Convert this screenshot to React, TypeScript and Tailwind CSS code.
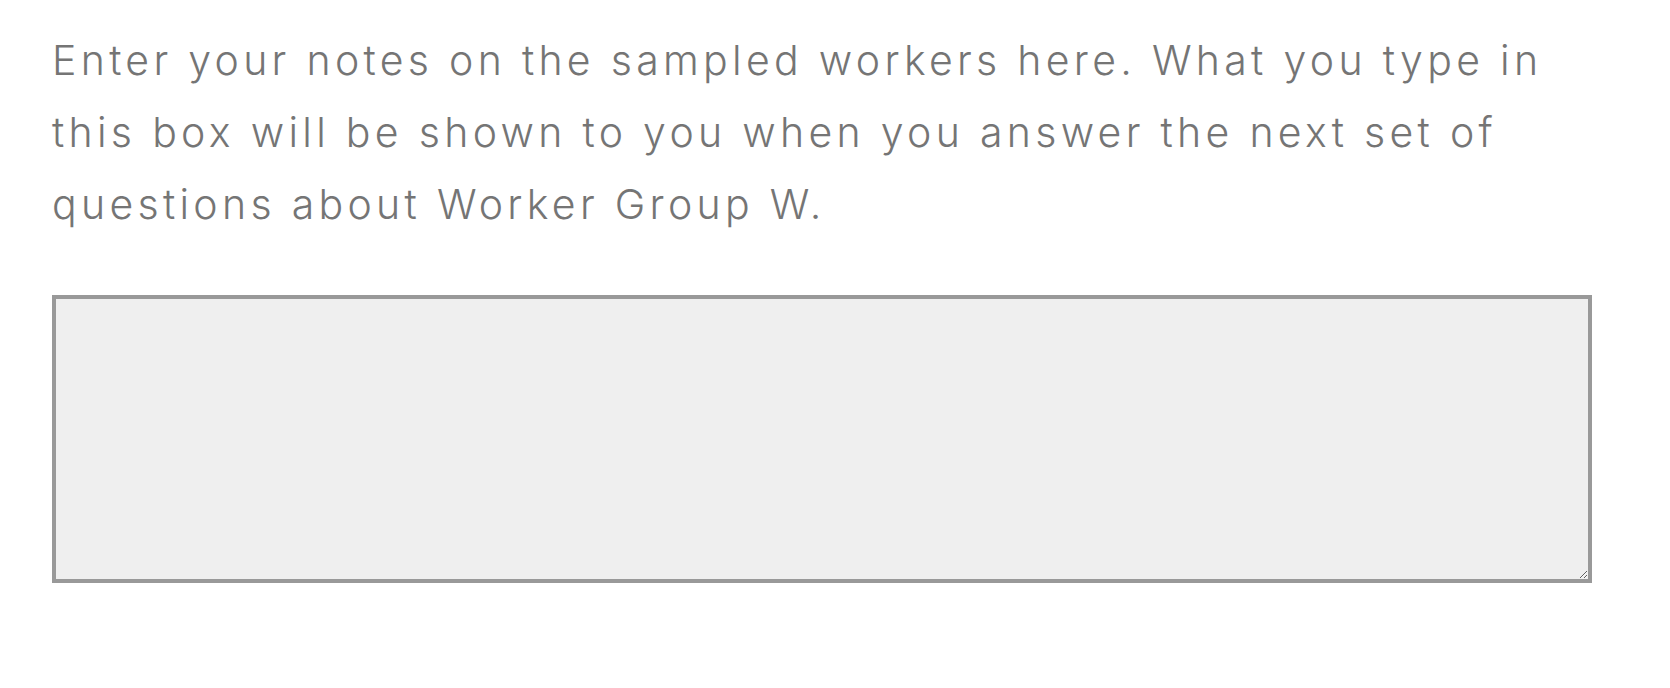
export default function App() {
  return (
    <div className="min-h-screen bg-white pl-[52px] pt-[24px]">
      <p className="font-['Inter',sans-serif] text-[41px] leading-[72px] font-light tracking-[4.3px] text-[#757575]">
        Enter your notes on the sampled workers here. What you type in
        <br />
        this box will be shown to you when you answer the next set of
        <br />
        questions about Worker Group W.
      </p>
      <textarea className="mt-[55px] block w-[1540px] h-[288px] border-4 border-[#999999] bg-[#efefef] resize-y outline-none" />
    </div>
  );
}
